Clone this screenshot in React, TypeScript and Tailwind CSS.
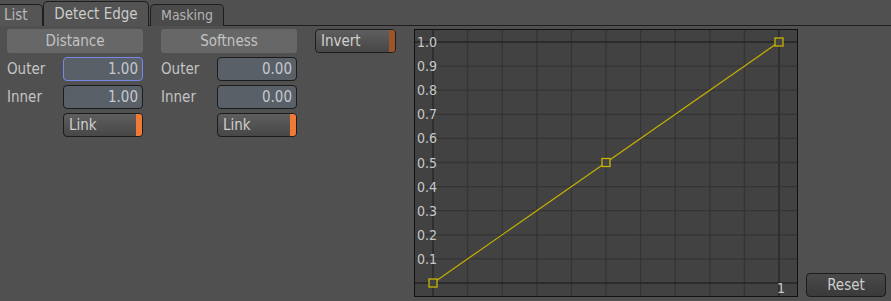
import { FC } from "react";

const font = { fontFamily: '"DejaVu Sans Condensed", "DejaVu Sans", sans-serif' };

// Value field with dark rounded border
const Field: FC<{ value: string; focused?: boolean }> = ({ value, focused }) => (
    <div
        className={`flex h-[24px] w-[80px] items-center justify-end rounded-[4px] border bg-[#596068] pr-[4px] text-[15px] text-[#c4c8cc] ${
            focused ? "border-[#7888e8]" : "border-[#1c1c1c]"
        }`}
    >
        {value}
    </div>
);

const Toggle: FC<{ label: string; width: string; strip: string }> = ({ label, width, strip }) => (
    <div
        className={`flex h-[24px] ${width} items-stretch overflow-hidden rounded-[4px] border border-[#1c1c1c] bg-gradient-to-b from-[#5e5e5e] to-[#474747]`}
    >
        <div className="flex flex-1 items-center pl-[5px] text-[15px] text-[#cfcfcf]">{label}</div>
        <div className={`w-[6px] ${strip}`} />
    </div>
);

const ParamColumn: FC<{ title: string; outer: string; inner: string; focused?: boolean }> = ({
    title,
    outer,
    inner,
    focused,
}) => (
    <div className="flex w-[136px] flex-col gap-[4px]">
        <div className="flex h-[24px] items-center justify-center rounded-[3px] bg-[#676767] text-[15px] text-[#c2c2c2]">
            {title}
        </div>
        <div className="flex items-center">
            <span className="w-[56px] text-[15px] text-[#c4c4c4]">Outer</span>
            <Field value={outer} focused={focused} />
        </div>
        <div className="flex items-center">
            <span className="w-[56px] text-[15px] text-[#c4c4c4]">Inner</span>
            <Field value={inner} />
        </div>
        <div className="flex items-center">
            <span className="w-[56px]" />
            <Toggle label="Link" width="w-[80px]" strip="bg-[#ee7a36]" />
        </div>
    </div>
);

const Curve: FC = () => {
    const x0 = 19;
    const x1 = 365;
    const y0 = 254;
    const y1 = 13;
    const dx = (x1 - x0) / 10;
    const dy = (y0 - y1) / 10;
    const ticks = Array.from({ length: 11 }, (_, i) => i);
    const mx = (x0 + x1) / 2;
    const my = (y0 + y1) / 2;

    return (
        <svg width={384} height={268} className="block" style={font}>
            <rect x={0.5} y={0.5} width={383} height={267} fill="#424242" stroke="#111" />
            {ticks.map((i) => (
                <line
                    key={`v${i}`}
                    x1={x0 + i * dx}
                    x2={x0 + i * dx}
                    y1={1}
                    y2={267}
                    stroke={i === 0 || i === 10 ? "#262626" : "#343434"}
                    strokeWidth={1.3}
                />
            ))}
            {ticks.map((i) => (
                <line
                    key={`h${i}`}
                    x1={1}
                    x2={383}
                    y1={y0 - i * dy}
                    y2={y0 - i * dy}
                    stroke={i === 0 || i === 10 ? "#262626" : "#343434"}
                    strokeWidth={1.3}
                />
            ))}
            {ticks.slice(1).map((i) => (
                <text key={`t${i}`} x={3} y={y0 - i * dy + 5} fontSize={14} fill="#c8c8c8">
                    {(i / 10).toFixed(1)}
                </text>
            ))}
            <text x={363} y={264} fontSize={14} fill="#c8c8c8">
                1
            </text>
            <line x1={x0} y1={y0} x2={x1} y2={y1} stroke="#c4b000" strokeWidth={1.2} />
            {[
                [x0, y0],
                [mx, my],
                [x1, y1],
            ].map(([cx, cy], i) => (
                <rect
                    key={i}
                    x={cx - 4}
                    y={cy - 4}
                    width={8}
                    height={8}
                    fill="#424242"
                    stroke="#c8b400"
                    strokeWidth={1.3}
                />
            ))}
        </svg>
    );
};

const App: FC = () => {
    return (
        <div className="h-[301px] w-[891px] overflow-hidden bg-[#505050]" style={font}>
            {/* tabs */}
            <div className="flex h-[26px] items-end border-b border-[#1e1e1e] text-[15px]">
                <div className="mb-[-1px] flex h-[22px] w-[43px] items-center rounded-tr-[5px] border-r border-t border-[#1e1e1e] bg-[#555] pl-[4px] text-[#b8b8b8]">
                    List
                </div>
                <div className="z-10 mb-[-1px] flex h-[25px] w-[106px] items-center justify-center rounded-t-[5px] border-x border-t border-[#1e1e1e] bg-[#535353] text-[#cbcbcb]">
                    Detect Edge
                </div>
                <div className="ml-[1px] mb-[-1px] flex h-[22px] w-[74px] items-center justify-center rounded-t-[5px] border-x border-t border-[#1e1e1e] bg-[#4a4a4a] text-[14px] text-[#b4b4b4]">
                    Masking
                </div>
            </div>

            {/* body */}
            <div className="flex gap-[18px] pl-[7px] pt-[3px]">
                <ParamColumn title="Distance" outer="1.00" inner="1.00" focused />
                <ParamColumn title="Softness" outer="0.00" inner="0.00" />
                <div>
                    <Toggle label="Invert" width="w-[81px]" strip="bg-[#9c5428]" />
                </div>
                <div className="flex gap-[8px]">
                    <Curve />
                    <div className="flex flex-col justify-end">
                        <div className="flex h-[24px] w-[80px] items-center justify-center rounded-[4px] border border-[#1c1c1c] bg-gradient-to-b from-[#4a4a4a] to-[#3a3a3a] text-[15px] text-[#cdcdcd]">
                            Reset
                        </div>
                    </div>
                </div>
            </div>
        </div>
    );
};

export default App;
